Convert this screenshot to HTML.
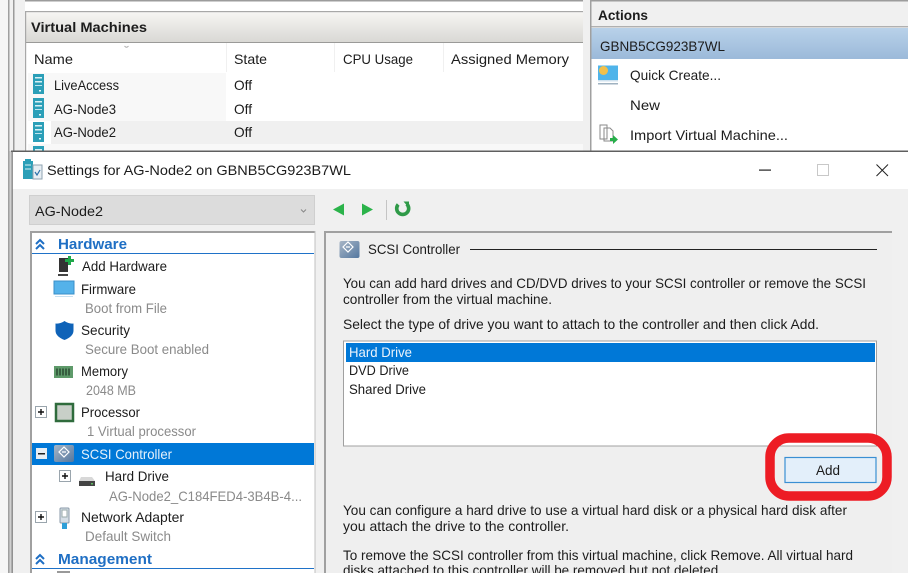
<!DOCTYPE html>
<html><head><meta charset="utf-8"><style>
html,body{margin:0;padding:0;width:908px;height:573px;overflow:hidden;background:#fff}
svg{display:block;filter:blur(.3px)}
text{font-family:"Liberation Sans",sans-serif;font-size:14px;fill:#1c1c1c}
.g{fill:#8a8a8a}.b{font-weight:bold}.h{fill:#1f6fc4;font-weight:bold;font-size:14.5px}
</style></head><body>
<svg width="908" height="573" viewBox="0 0 908 573" xmlns="http://www.w3.org/2000/svg">
<defs>
<linearGradient id="vm" x1="0" y1="0" x2="0" y2="1"><stop offset="0" stop-color="#f7f6f4"/><stop offset="1" stop-color="#d9d8d4"/></linearGradient>
<linearGradient id="act" x1="0" y1="0" x2="0" y2="1"><stop offset="0" stop-color="#b8d1e9"/><stop offset="1" stop-color="#9bb9d9"/></linearGradient>
<linearGradient id="scsi" x1="0" y1="0" x2="1" y2="1"><stop offset="0" stop-color="#a8b6c6"/><stop offset="1" stop-color="#53779f"/></linearGradient>
<g id="srv"><rect width="11" height="20" fill="#2b9fb8"/><rect x="2" y="3" width="7" height="1.5" fill="#d8f0f5"/><rect x="2" y="7" width="7" height="1.5" fill="#d8f0f5"/><rect x="2" y="11" width="7" height="1" fill="#bfe5ee"/><rect x="6" y="16" width="2" height="1.5" fill="#e8f6f9"/></g>
<g id="pl"><rect x=".5" y=".5" width="11" height="11" fill="#fff" stroke="#9aa5ad"/><path d="M3 6h6M6 3v6" stroke="#111" stroke-width="1.4"/></g>
</defs>

<!-- backdrop -->
<rect width="908" height="573" fill="#f0f0f0"/>
<rect x="0" y="0" width="8" height="573" fill="#f6f6f6"/>
<rect x="8" y="0" width="1.5" height="573" fill="#a0a0a0"/>
<rect x="9.500" y="151" width="2" height="422" fill="#d0d0d0"/>
<rect x="13" y="0" width="1.5" height="151" fill="#9a9a9a"/>

<!-- VM panel -->
<rect x="25" y="0" width="558" height="151" fill="#fff"/>
<rect x="25" y="0" width="558" height="1.5" fill="#9c9c9c"/>
<rect x="25" y="11" width="558" height="31" fill="url(#vm)"/>
<rect x="25" y="11" width="558" height="1.2" fill="#a8a8a8"/>
<rect x="25" y="42" width="558" height="1" fill="#9a9a98"/>
<rect x="25" y="11" width="1.2" height="140" fill="#a8a8a8"/>
<text class="b" x="31" y="32" textLength="116" lengthAdjust="spacingAndGlyphs">Virtual Machines</text>
<path d="M124.5 46q2 2.500 4 0" stroke="#aaa" fill="none"/>
<rect x="226" y="43" width="1" height="29" fill="#f0f0f0"/><rect x="334" y="43" width="1" height="29" fill="#f0f0f0"/><rect x="443" y="43" width="1" height="29" fill="#f0f0f0"/>
<text x="34" y="64" textLength="39" lengthAdjust="spacingAndGlyphs" fill="#333">Name</text>
<text x="234" y="64" textLength="33" lengthAdjust="spacingAndGlyphs">State</text>
<text x="343" y="64" textLength="70" lengthAdjust="spacingAndGlyphs">CPU Usage</text>
<text x="451" y="64" textLength="118" lengthAdjust="spacingAndGlyphs">Assigned Memory</text>
<rect x="28" y="73" width="198" height="48" fill="#f8f8f8"/>
<rect x="51" y="121" width="532" height="23" fill="#f0f0f0"/>
<rect x="28" y="144" width="555" height="7" fill="#f8f8f8"/>
<use href="#srv" x="33" y="74"/><use href="#srv" x="33" y="98"/><use href="#srv" x="33" y="122"/><use href="#srv" x="33" y="146"/>
<text x="54" y="90" textLength="65" lengthAdjust="spacingAndGlyphs">LiveAccess</text>
<text x="54" y="114" textLength="62" lengthAdjust="spacingAndGlyphs">AG-Node3</text>
<text x="54" y="137" textLength="62" lengthAdjust="spacingAndGlyphs">AG-Node2</text>
<text x="234" y="90" textLength="18" lengthAdjust="spacingAndGlyphs">Off</text>
<text x="234" y="114" textLength="18" lengthAdjust="spacingAndGlyphs">Off</text>
<text x="234" y="137" textLength="18" lengthAdjust="spacingAndGlyphs">Off</text>

<!-- Actions -->
<rect x="590" y="0" width="318" height="151" fill="#fff"/>
<rect x="590" y="0" width="318" height="26" fill="#f0f0f0"/>
<rect x="590" y="0" width="318" height="1.5" fill="#9c9c9c"/>
<rect x="590" y="26" width="318" height="1.5" fill="#b0b0b0"/>
<rect x="590" y="0" width="1.5" height="151" fill="#a0a0a0"/>
<text class="b" x="598" y="20" textLength="50" lengthAdjust="spacingAndGlyphs">Actions</text>
<rect x="591.500" y="28" width="316.500" height="31" fill="url(#act)"/>
<text x="600" y="51" textLength="125" lengthAdjust="spacingAndGlyphs" fill="#24303c">GBNB5CG923B7WL</text>
<rect x="598" y="65.500" width="20" height="14.500" fill="#4fb4ea"/><circle cx="603.500" cy="70.500" r="4.500" fill="#f2c04a"/><rect x="598" y="80" width="20" height="1.500" fill="#cfe2ef"/><rect x="598" y="83" width="20" height="1.500" fill="#9fb2c0"/>
<text x="630" y="80" textLength="91" lengthAdjust="spacingAndGlyphs">Quick Create...</text>
<text x="630" y="110" textLength="30" lengthAdjust="spacingAndGlyphs">New</text>
<path d="M600 125h7v14h-7zM604 128h6l3 3v10h-9z" fill="#fff" stroke="#8a8a8a"/><path d="M610 138h3v-3l5 4.500-5 4.500v-3h-3z" fill="#27ae4a"/>
<text x="630" y="140" textLength="158" lengthAdjust="spacingAndGlyphs">Import Virtual Machine...</text>

<!-- Dialog -->
<rect x="11" y="151" width="897" height="422" fill="#f0f0f0"/>
<rect x="12" y="152" width="896" height="37" fill="#fff"/>
<rect x="11" y="150.500" width="897" height="1.500" fill="#5f5f5f"/>
<rect x="11.500" y="151" width="1.200" height="422" fill="#6a6a6a"/>
<path d="M23 161h10v18h-10z" fill="#2b9fb8"/><path d="M25 159h6v3h-6z" fill="#2b9fb8"/><path d="M25 165h6M25 169h6" stroke="#d8f0f5"/><path d="M33 165h9v14h-9z" fill="#e7eef3" stroke="#8fa3b0"/><path d="M35 172l2 3 3-5" stroke="#2b6fa8" fill="none" stroke-width="1.200"/>
<text x="47" y="175" textLength="304" lengthAdjust="spacingAndGlyphs" fill="#222">Settings for AG-Node2 on GBNB5CG923B7WL</text>
<rect x="759" y="169.500" width="12" height="1.200" fill="#222"/>
<rect x="817.500" y="164.500" width="11" height="11" fill="none" stroke="#c8c8c8"/>
<path d="M876.500 164.500l11.500 11.500M888 164.500l-11.500 11.500" stroke="#222" stroke-width="1"/>

<!-- Combo & toolbar -->
<rect x="29.500" y="195.500" width="285" height="29" fill="#dcdcdc" stroke="#cfcfcf"/>
<text x="35" y="216" textLength="68" lengthAdjust="spacingAndGlyphs" fill="#333">AG-Node2</text>
<path d="M301 209.500l2.500 2.500 2.500-2.500" stroke="#888" fill="none"/>
<path d="M344 203.500v12l-11-6z" fill="#2bb34a"/>
<path d="M362 203.500v12l11-6z" fill="#2bb34a"/>
<rect x="386" y="200" width="1" height="20" fill="#c4c4c4"/>
<path d="M398.200 204.500a6 6 0 1 0 8.500 -.5" stroke="#2f9a48" stroke-width="3.600" fill="none"/><path d="M403.500 201.500h5.500v6.500z" fill="#2f9a48"/>

<!-- Tree panel -->
<rect x="30" y="231" width="285" height="342" fill="#fff"/>
<rect x="30" y="231" width="285" height="2" fill="#a0a0a0"/>
<rect x="30" y="231" width="2" height="342" fill="#a0a0a0"/>
<rect x="314.500" y="231" width="1" height="342" fill="#c0c0c0"/>
<path d="M36 244l4-4 4 4M36 249l4-4 4 4" stroke="#1f6fc4" stroke-width="2" fill="none"/>
<text class="h" x="58" y="249" textLength="69" lengthAdjust="spacingAndGlyphs">Hardware</text>
<rect x="32" y="253" width="282" height="1" fill="#1f72c8"/>

<path d="M59 258h9v14h-9z" fill="#333"/><path d="M58 274h10v2h-10z" fill="#444"/><path d="M68 256h3v3h3v3h-3v3h-3v-3h-3v-3h3z" fill="#1fa84a"/>
<text x="82" y="271" textLength="85" lengthAdjust="spacingAndGlyphs">Add Hardware</text>

<rect x="54" y="281" width="20" height="13" fill="#54b2ea" stroke="#3a8fc8"/><rect x="55" y="296" width="18" height="1" fill="#c8e0f0"/>
<text x="81" y="294" textLength="55" lengthAdjust="spacingAndGlyphs">Firmware</text>
<text class="g" x="85" y="313" textLength="82" lengthAdjust="spacingAndGlyphs">Boot from File</text>

<path d="M64.500 321q4 3 9 2.500v7q0 6-9 9.500-9-3.500-9-9.500v-7q5 .5 9-2.500z" fill="#0f63b8"/>
<text x="81" y="335" textLength="49" lengthAdjust="spacingAndGlyphs">Security</text>
<text class="g" x="85" y="354" textLength="124" lengthAdjust="spacingAndGlyphs">Secure Boot enabled</text>

<rect x="54" y="366" width="19" height="12" fill="#5e9a6a"/><path d="M57 368.500v7M60 368.500v7M63 368.500v7M66 368.500v7M69 368.500v7" stroke="#2a4a32" stroke-width="1.500"/>
<text x="81" y="376" textLength="47" lengthAdjust="spacingAndGlyphs">Memory</text>
<text class="g" x="86" y="395" textLength="50" lengthAdjust="spacingAndGlyphs">2048 MB</text>

<use href="#pl" x="35" y="406"/>
<rect x="56" y="404" width="17" height="17" fill="#c8cfc8" stroke="#2f6b3c" stroke-width="2.500"/>
<text x="81" y="417" textLength="59" lengthAdjust="spacingAndGlyphs">Processor</text>
<text class="g" x="87" y="436" textLength="109" lengthAdjust="spacingAndGlyphs">1 Virtual processor</text>

<rect x="32" y="443" width="282" height="22" fill="#0078d7"/>
<rect x="36" y="448" width="11" height="11" fill="#e8eef4"/><rect x="38" y="453" width="7" height="1.500" fill="#222"/>
<rect x="54" y="445" width="20" height="17" rx="2" fill="url(#scsi)"/><path d="M64 447l-5 5 5 5 5-5zM66 452h-4" stroke="#fff" fill="none" stroke-width="1.200"/>
<text x="81" y="459" textLength="91" lengthAdjust="spacingAndGlyphs" style="fill:#e6f1fb">SCSI Controller</text>

<use href="#pl" x="59" y="470"/>
<path d="M81 477h11l3 4v5h-16v-5z" fill="#d8d8d8"/><rect x="79" y="481" width="16" height="5" fill="#444"/><rect x="91" y="483" width="2" height="1.500" fill="#5dbb60"/>
<text x="105" y="481" textLength="64" lengthAdjust="spacingAndGlyphs">Hard Drive</text>
<text class="g" x="109" y="501" textLength="193" lengthAdjust="spacingAndGlyphs">AG-Node2_C184FED4-3B4B-4...</text>

<use href="#pl" x="35" y="511"/>
<rect x="60" y="508" width="9" height="15" rx="1" fill="#d5dee6" stroke="#8a9aa8"/><rect x="62" y="510" width="5" height="7" fill="#fff" stroke="#9aa"/><rect x="62" y="523" width="5" height="6" fill="#2e9fd8"/>
<text x="81" y="522" textLength="103" lengthAdjust="spacingAndGlyphs">Network Adapter</text>
<text class="g" x="85" y="541" textLength="86" lengthAdjust="spacingAndGlyphs">Default Switch</text>

<path d="M36 559l4-4 4 4M36 564l4-4 4 4" stroke="#1f6fc4" stroke-width="2" fill="none"/>
<text class="h" x="58" y="564" textLength="94" lengthAdjust="spacingAndGlyphs">Management</text>
<rect x="32" y="568" width="282" height="1" fill="#1f72c8"/>
<rect x="57" y="571" width="13" height="2" fill="#999"/>

<!-- Right panel -->
<rect x="324" y="231" width="568" height="342" fill="#efefef"/>
<rect x="324" y="231" width="568" height="2" fill="#a0a0a0"/>
<rect x="324" y="231" width="2" height="342" fill="#a0a0a0"/>
<rect x="339.500" y="241" width="20" height="17" rx="2" fill="url(#scsi)"/><path d="M348 242l-5 5 5 5 5-5zM350 247h-4" stroke="#fff" fill="none" stroke-width="1.200"/>
<text x="368" y="254" textLength="92" lengthAdjust="spacingAndGlyphs">SCSI Controller</text>
<rect x="470" y="249" width="407" height="1" fill="#222"/>
<text x="343" y="288" textLength="523" lengthAdjust="spacingAndGlyphs">You can add hard drives and CD/DVD drives to your SCSI controller or remove the SCSI</text>
<text x="343" y="304" textLength="209" lengthAdjust="spacingAndGlyphs">controller from the virtual machine.</text>
<text x="343" y="329" textLength="476" lengthAdjust="spacingAndGlyphs">Select the type of drive you want to attach to the controller and then click Add.</text>

<rect x="343.500" y="341" width="533" height="105" fill="#fff" stroke="#a0a0a0"/>
<rect x="346" y="343" width="529" height="19" fill="#0078d7"/>
<text x="349" y="357" textLength="63" lengthAdjust="spacingAndGlyphs" style="fill:#eaf3fb">Hard Drive</text>
<text x="349" y="375" textLength="60" lengthAdjust="spacingAndGlyphs">DVD Drive</text>
<text x="349" y="394" textLength="77" lengthAdjust="spacingAndGlyphs">Shared Drive</text>

<rect x="785" y="457.500" width="91" height="25" fill="#e3effa" stroke="#3a8fd3" stroke-width="1.200"/>
<text x="816" y="475" textLength="24" lengthAdjust="spacingAndGlyphs">Add</text>
<rect x="770" y="438" width="117" height="58" rx="19" ry="19" fill="none" stroke="#ed1c24" stroke-width="9.500"/>

<text x="343" y="515" textLength="504" lengthAdjust="spacingAndGlyphs">You can configure a hard drive to use a virtual hard disk or a physical hard disk after</text>
<text x="343" y="531" textLength="226" lengthAdjust="spacingAndGlyphs">you attach the drive to the controller.</text>
<text x="343" y="560" textLength="510" lengthAdjust="spacingAndGlyphs">To remove the SCSI controller from this virtual machine, click Remove. All virtual hard</text>
<text x="343" y="575" textLength="379" lengthAdjust="spacingAndGlyphs">disks attached to this controller will be removed but not deleted.</text>
</svg>
</body></html>
